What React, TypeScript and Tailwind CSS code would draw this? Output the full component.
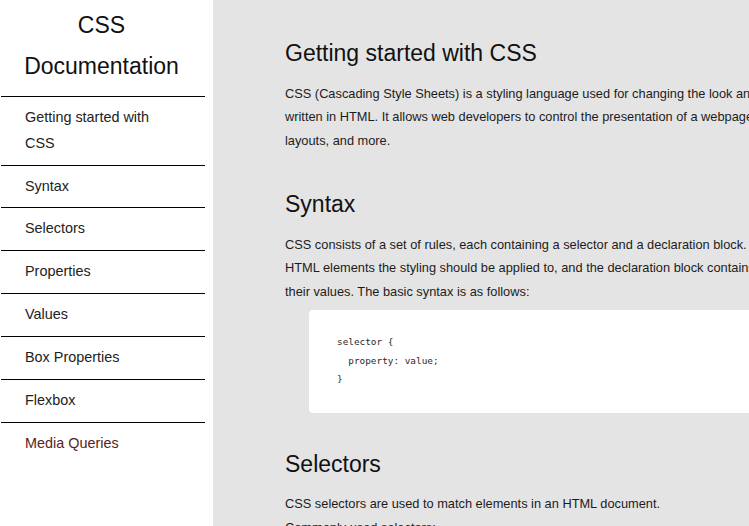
import React from "react";

const navItems = [
  "Getting started with CSS",
  "Syntax",
  "Selectors",
  "Properties",
  "Values",
  "Box Properties",
  "Flexbox",
  "Media Queries",
];

export default function App() {
  return (
    <div className="flex h-[526px] w-[749px] overflow-hidden bg-[#e4e4e4] font-['Liberation_Sans',Arial,sans-serif] text-[#1c1c1c]">
      <aside className="w-[213px] shrink-0 bg-white">
        <h1 className="w-[203px] pt-[5px] pb-[9px] text-center text-[23px] font-normal leading-[41px] text-[#111]">
          CSS
          <br />
          Documentation
        </h1>
        <ul className="ml-[1px] w-[204px]">
          {navItems.map((item, i) => (
            <li
              key={item}
              className={`border-t border-black px-[24px] py-[8px] text-[14.4px] leading-[25.83px] ${
                i === navItems.length - 1 ? "text-[#5a2222]" : "text-[#222]"
              }`}
            >
              {item}
            </li>
          ))}
        </ul>
      </aside>
      <main className="min-w-0 flex-1 overflow-hidden">
        <div className="w-[760px] pl-[72px] pt-[40px]">
          <section>
            <h2 className="text-[23px] font-normal leading-[26.5px] text-[#111]">
              Getting started with CSS
            </h2>
            <p className="mt-[15px] whitespace-nowrap text-[12.8px] leading-[23.5px]">
              CSS (Cascading Style Sheets) is a styling language used for changing the look and formatting of a document
              <br />
              written in HTML. It allows web developers to control the presentation of a webpage, including colors, fonts,
              <br />
              layouts, and more.
            </p>
          </section>
          <section className="mt-[39px]">
            <h2 className="text-[23px] font-normal leading-[26.5px] text-[#111]">Syntax</h2>
            <p className="mt-[15px] whitespace-nowrap text-[12.8px] leading-[23.5px]">
              CSS consists of a set of rules, each containing a selector and a declaration block. The selector specifies which
              <br />
              HTML elements the styling should be applied to, and the declaration block contains one or more properties and
              <br />
              their values. The basic syntax is as follows:
            </p>
            <pre className="ml-[24px] mt-[7px] w-[620px] rounded-[4px] bg-white pt-[23px] pb-[24px] pl-[28px] font-['DejaVu_Sans_Mono',monospace] text-[9.4px] leading-[18.5px] text-[#2a2a2a]">
              {"selector {\n  property: value;\n}"}
            </pre>
          </section>
          <section className="mt-[38px]">
            <h2 className="text-[23px] font-normal leading-[26.5px] text-[#111]">Selectors</h2>
            <p className="mt-[15px] whitespace-nowrap text-[12.8px] leading-[23.5px]">
              CSS selectors are used to match elements in an HTML document.
            </p>
            <p className="whitespace-nowrap text-[12.8px] leading-[23.5px]">Commonly used selectors:</p>
          </section>
        </div>
      </main>
    </div>
  );
}
